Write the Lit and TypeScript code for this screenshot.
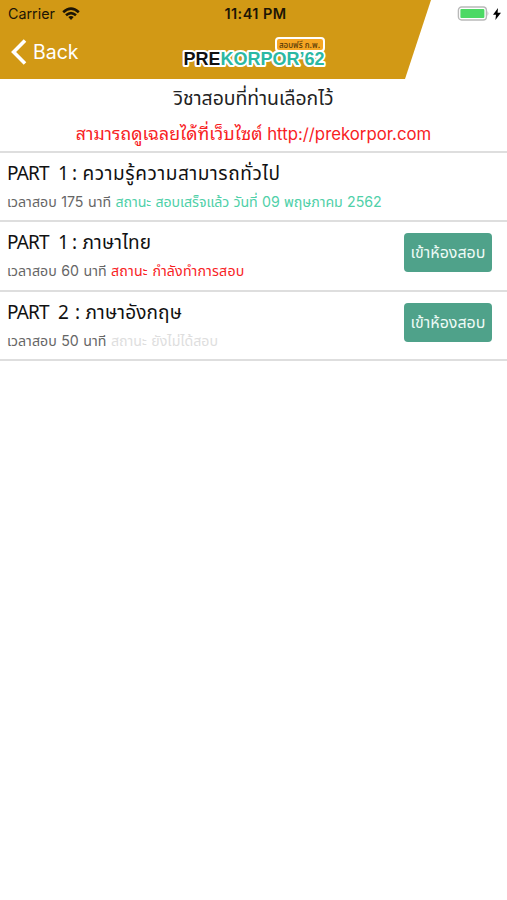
import { LitElement, html, css } from "lit";
import { customElement, property } from "lit/decorators.js";

type Status = "done" | "active" | "pending";

interface Exam {
  part: number;
  title: string;
  time: string;
  status: string;
  kind: Status;
  enter: boolean;
}

const EXAMS: Exam[] = [
  { part: 1, title: "ความรู้ความสามารถทั่วไป", time: "เวลาสอบ 175 นาที", status: "สถานะ สอบเสร็จแล้ว วันที่ 09 พฤษภาคม 2562", kind: "done", enter: false },
  { part: 1, title: "ภาษาไทย", time: "เวลาสอบ 60 นาที", status: "สถานะ กำลังทำการสอบ", kind: "active", enter: true },
  { part: 2, title: "ภาษาอังกฤษ", time: "เวลาสอบ 50 นาที", status: "สถานะ ยังไม่ได้สอบ", kind: "pending", enter: true },
];

@customElement("app-header")
export class AppHeader extends LitElement {
  static styles = css`
    :host { display: block; height: 79px; position: relative; background: #fff; }
    .bg { position: absolute; inset: 0; background: #d29915; clip-path: polygon(0 0, 431px 0, 405px 79px, 0 79px); }
    .status { position: relative; display: grid; grid-template-columns: 1fr auto 1fr; align-items: center; height: 27px; padding: 0 6px 1px 8px; font-size: 14.3px; color: #1c1505; }
    .carrier { display: flex; align-items: center; gap: 7px; }
    .clock { font-weight: 600; font-size: 14.5px; letter-spacing: 0.45px; margin-left: 2px; }
    .power { display: flex; justify-content: flex-end; align-items: center; gap: 4px; }
    .nav { position: relative; display: grid; grid-template-columns: 1fr auto 1fr; height: 52px; }
    .back { display: flex; align-items: center; gap: 6px; height: 48px; padding-left: 11px; color: #fff; font-size: 19.5px; }
    svg { display: block; }
    .logo { margin-top: 8px; display: flex; flex-direction: column; width: 146px; }
    .tag { align-self: flex-end; box-sizing: border-box; width: 50px; height: 15px; margin: 1px 2px 0 0; border: 2px solid #fff; border-radius: 4px; background: #f5a623; color: #5a3b08; font-size: 8px; line-height: 12px; font-weight: 500; text-align: center; white-space: nowrap; }
    .word { margin-top: -4px; overflow: visible; font-family: "Liberation Sans", sans-serif; font-weight: 700; font-size: 18.5px; paint-order: stroke; }
  `;
  render() {
    return html`
      <div class="bg"></div>
      <div class="status">
        <div class="carrier">
          <span>Carrier</span>
          <svg width="18" height="13" viewBox="0 0 18 13" fill="none" stroke="#1c1505" stroke-width="2.6">
            <path d="M1.2 5.2 Q9 -2 16.8 5.2" /><path d="M4 8.3 Q9 3.9 14 8.3" />
            <path d="M9 12.9 L6.3 10.1 Q9 8 11.7 10.1 Z" fill="#1c1505" stroke="none" />
          </svg>
        </div>
        <span class="clock">11:41 PM</span>
        <div class="power">
          <svg width="32" height="15" viewBox="0 0 32 15">
            <rect x="1.4" y="1" width="28" height="13" rx="3.2" fill="#fff" stroke="#b9b9b9" stroke-width="1.4" />
            <rect x="3.4" y="3" width="24" height="9" rx="1" fill="#4cd964" />
            <path d="M30.5 5 Q32.2 7.5 30.5 10 Z" fill="#b9b9b9" />
          </svg>
          <svg width="8" height="12" viewBox="0 0 8 12"><path d="M5 0 L0 6.7 H3 L2.4 12 L8 4.8 H4.6 Z" fill="#000" /></svg>
        </div>
      </div>
      <div class="nav">
        <div class="back">
          <svg width="16" height="26" viewBox="0 0 16 26" fill="none" stroke="#fff" stroke-width="3.6"><path d="M14 1.5 L2.6 13 L14 24.5" /></svg>
          <span>Back</span>
        </div>
        <div class="logo">
          <div class="tag">สอบฟรี ก.พ.</div>
          <svg class="word" width="146" height="22" viewBox="0 0 146 22">
            <text x="2.5" y="17" textLength="141" lengthAdjust="spacingAndGlyphs" stroke="#fff" stroke-width="4" stroke-linejoin="round"><tspan fill="#111">PRE</tspan><tspan fill="#2bb8a3">KORPOR’62</tspan></text>
          </svg>
        </div>
        <span></span>
      </div>`;
  }
}

@customElement("exam-row")
export class ExamRow extends LitElement {
  @property({ attribute: false }) exam!: Exam;
  static styles = css`
    :host { display: flex; box-sizing: border-box; height: 69.6px; justify-content: space-between; border-bottom: 2px solid #dedede; padding: 0 15px 0 7px; }
    .title { display: flex; margin-top: 8px; height: 25px; line-height: 25px; font-size: 19px; color: #111; white-space: nowrap; }
    .label, .num, .colon { font-family: "Noto Sans", sans-serif; }
    .label { width: 51px; letter-spacing: -0.8px; }
    .num { width: 14px; }
    .num.wide { width: 17px; }
    .colon { width: 10.5px; }
    .long { letter-spacing: 0.6px; }
    .short { letter-spacing: 0.15px; }
    .meta { margin-top: 6px; height: 20px; line-height: 20px; font-size: 14.2px; word-spacing: 0.5px; white-space: nowrap; color: #666; }
    .done { color: #4fd0a8; letter-spacing: -0.08px; }
    .active { color: #f8221f; letter-spacing: 0.16px; }
    .pending { color: #dedede; }
    .enter { margin-top: 11.2px; width: 88px; height: 39px; padding: 1px 0 0; border: 0; border-radius: 4px; background: #4fa28a; color: #eefaf6; font: inherit; font-size: 16px; white-space: nowrap; }
  `;
  render() {
    const e = this.exam;
    return html`
      <div>
        <div class="title">
          <span class="label">PART</span><span class=${e.part === 1 ? "num" : "num wide"}>${e.part}</span><span class="colon">:</span><span class=${e.title.length > 12 ? "long" : "short"}>${e.title}</span>
        </div>
        <div class="meta"><span>${e.time}</span> <span class=${e.kind}>${e.status}</span></div>
      </div>
      ${e.enter ? html`<button class="enter">เข้าห้องสอบ</button>` : null}`;
  }
}

@customElement("app-root")
export class AppRoot extends LitElement {
  static styles = css`
    :host { display: block; height: 900px; overflow: hidden; background: #fff; font-family: Inter, "Noto Sans Thai", "Noto Sans", sans-serif; }
    .intro { box-sizing: border-box; height: 73.6px; border-bottom: 2px solid #dedede; text-align: center; white-space: nowrap; }
    .heading { height: 38px; line-height: 38px; font-size: 19.4px; color: #222; }
    .note { height: 33px; line-height: 30px; font-size: 16.8px; color: #f8221f; }
    .thai { font-family: "Noto Sans Thai Looped", "Noto Looped Thai", Loma, Garuda, Inter, sans-serif; font-size: 17.7px; }
  `;
  render() {
    return html`
      <app-header></app-header>
      <div class="intro">
        <div class="heading">วิชาสอบที่ท่านเลือกไว้</div>
        <div class="note"><span class="thai">สามารถดูเฉลยได้ที่เว็บไซต์</span> http://prekorpor.com</div>
      </div>
      ${EXAMS.map((e) => html`<exam-row .exam=${e}></exam-row>`)}`;
  }
}
